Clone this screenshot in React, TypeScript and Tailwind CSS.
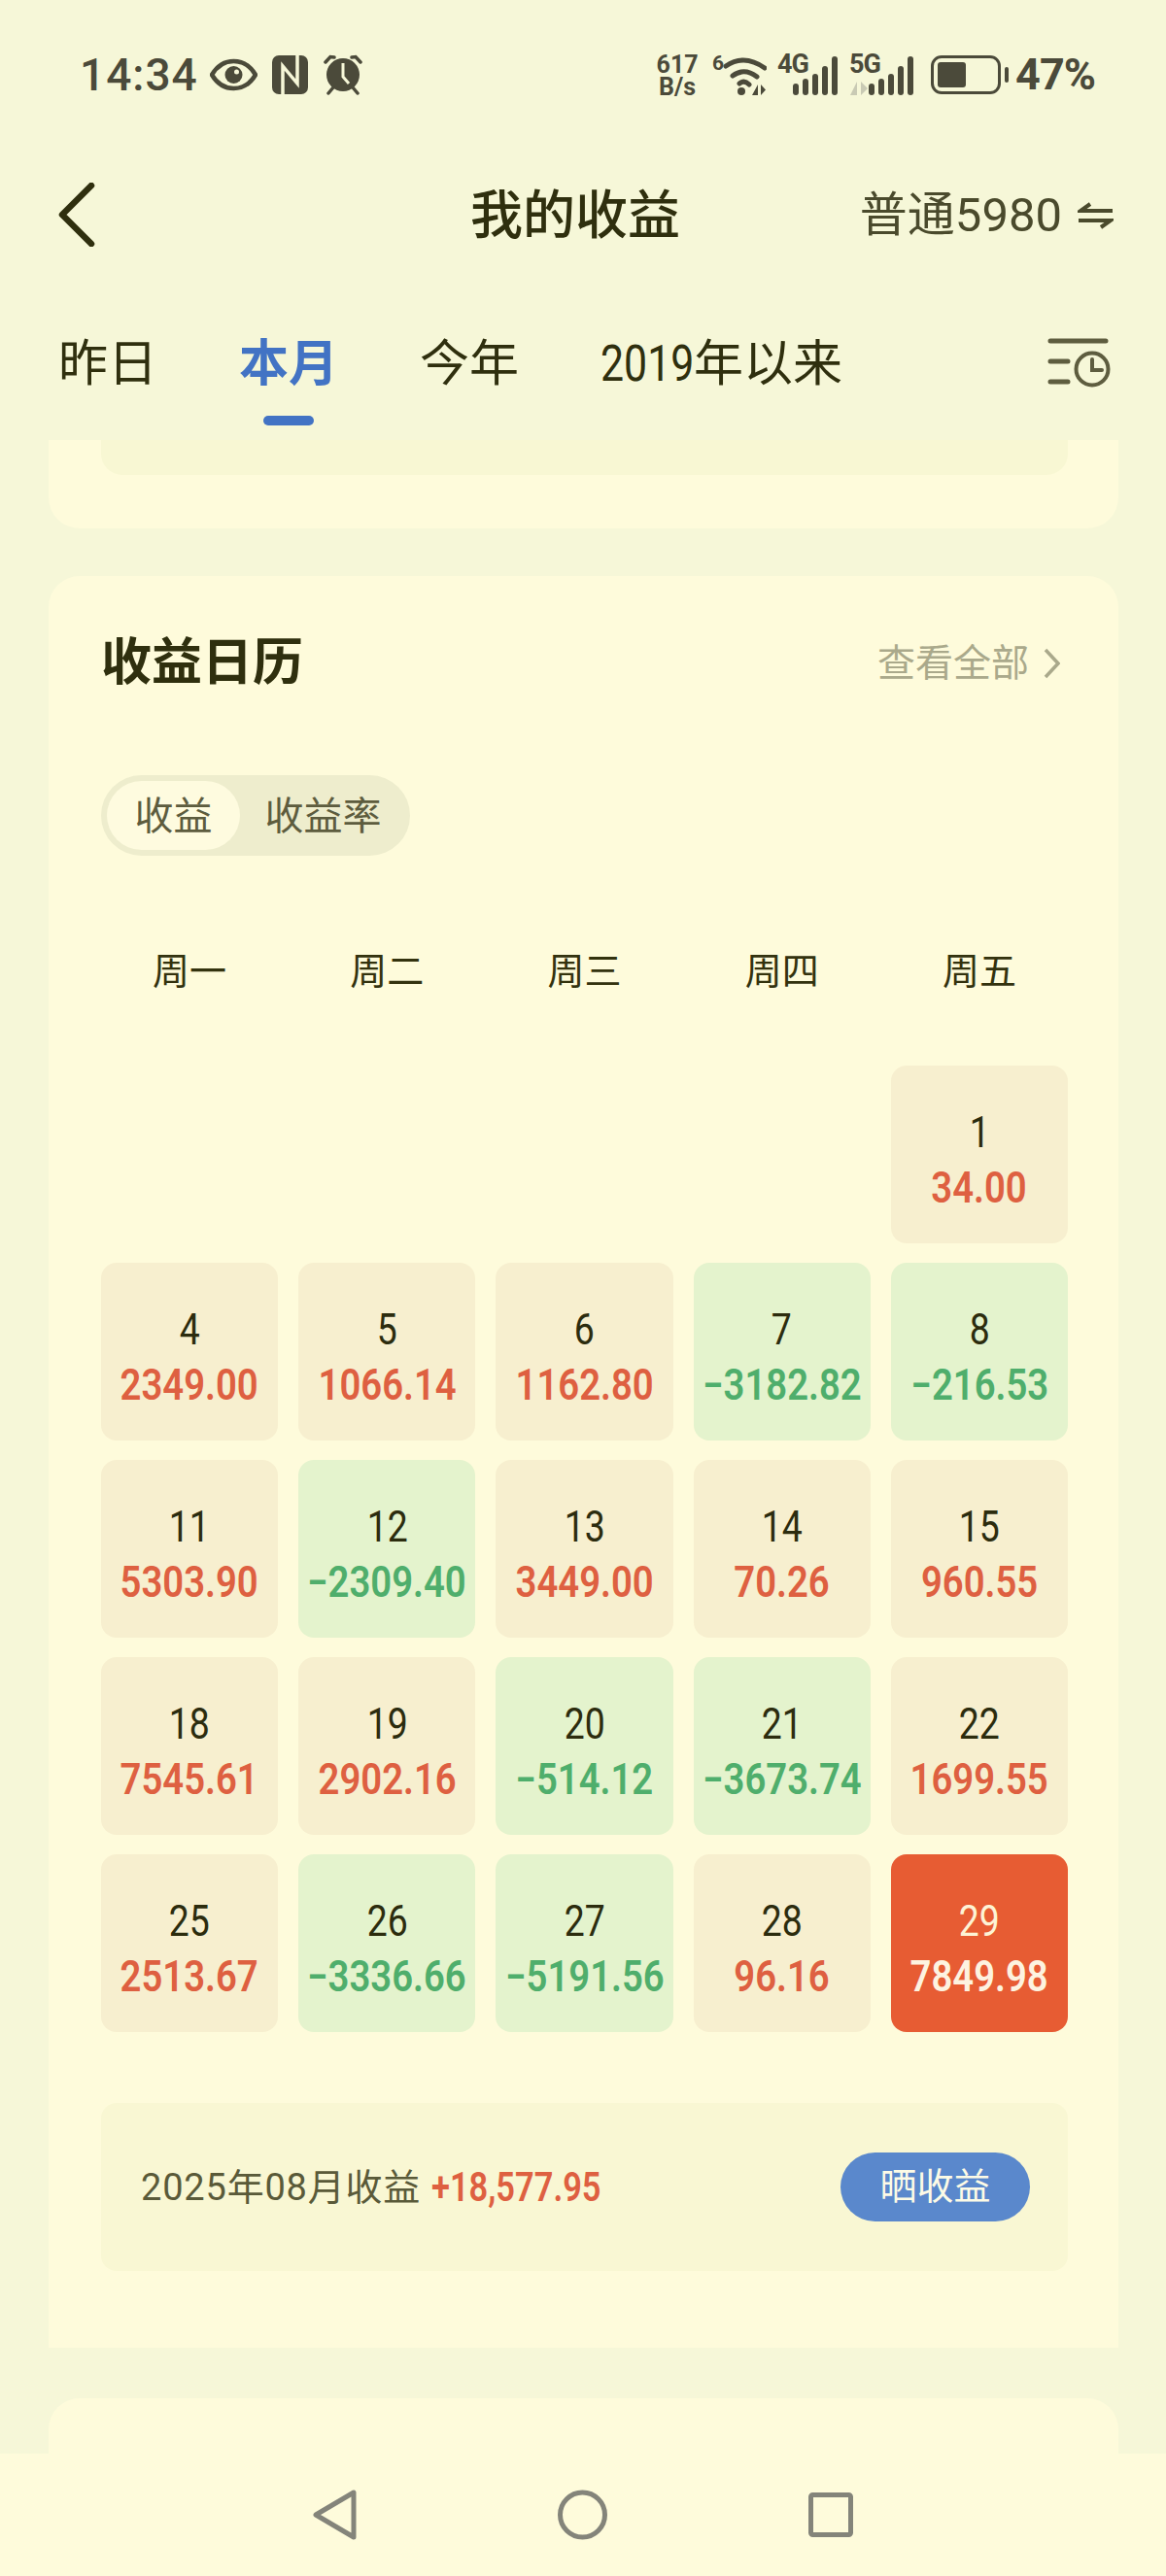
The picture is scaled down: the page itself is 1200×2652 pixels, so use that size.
type Day = { d: number; v: string; kind: 'up' | 'down' | 'max' }

const weeks: (Day | null)[][] = [
  [null, null, null, null, { d: 1, v: '34.00', kind: 'up' }],
  [
    { d: 4, v: '2349.00', kind: 'up' },
    { d: 5, v: '1066.14', kind: 'up' },
    { d: 6, v: '1162.80', kind: 'up' },
    { d: 7, v: '-3182.82', kind: 'down' },
    { d: 8, v: '-216.53', kind: 'down' },
  ],
  [
    { d: 11, v: '5303.90', kind: 'up' },
    { d: 12, v: '-2309.40', kind: 'down' },
    { d: 13, v: '3449.00', kind: 'up' },
    { d: 14, v: '70.26', kind: 'up' },
    { d: 15, v: '960.55', kind: 'up' },
  ],
  [
    { d: 18, v: '7545.61', kind: 'up' },
    { d: 19, v: '2902.16', kind: 'up' },
    { d: 20, v: '-514.12', kind: 'down' },
    { d: 21, v: '-3673.74', kind: 'down' },
    { d: 22, v: '1699.55', kind: 'up' },
  ],
  [
    { d: 25, v: '2513.67', kind: 'up' },
    { d: 26, v: '-3336.66', kind: 'down' },
    { d: 27, v: '-5191.56', kind: 'down' },
    { d: 28, v: '96.16', kind: 'up' },
    { d: 29, v: '7849.98', kind: 'max' },
  ],
]

function DayCell({ day }: { day: Day | null }) {
  if (!day) return <div className="h-[183px]" />
  const bg = day.kind === 'up' ? 'bg-[#f7efcf]' : day.kind === 'down' ? 'bg-[#e4f3cd]' : 'bg-[#e75c33]'
  const num = day.kind === 'max' ? 'text-[#fdf3d5]' : 'text-[#2c2c0e]'
  const val = day.kind === 'up' ? 'text-[#de6041]' : day.kind === 'down' ? 'text-[#4fae6c]' : 'text-[#fdf3e0]'
  return (
    <div className={`h-[183px] rounded-[16px] flex flex-col items-center pt-[46px] ${bg}`}>
      <div className={`text-[44px] leading-[46px] scale-x-[0.85] ${num}`}>{day.d}</div>
      <div className={`text-[44px] leading-[46px] mt-[11px] font-semibold scale-x-[0.87] whitespace-nowrap ${val}`}>{day.v.replace('-', '−')}</div>
    </div>
  )
}

function Signal({ label, wide, arrows }: { label: string; wide: string; arrows?: boolean }) {
  return (
    <div className={`flex h-[42px] relative ${wide}`}>
      <span className="absolute left-0 top-[-4px] text-[27px] leading-[28px] font-bold tracking-[-1px]">{label}</span>
      {arrows && (
        <svg width="20" height="14" viewBox="0 0 20 14" className="absolute left-0 bottom-0" fill="#c9cab4">
          <path d="M8 0v14H1ZM12 0l7 7-7 7Z" />
        </svg>
      )}
      <div className="absolute right-0 bottom-0 flex items-end gap-[4px]">
        <div className="w-[6px] h-[12px] rounded-full bg-current" />
        <div className="w-[6px] h-[17px] rounded-full bg-current" />
        <div className="w-[6px] h-[22px] rounded-full bg-current" />
        <div className="w-[6px] h-[30px] rounded-full bg-current" />
        <div className="w-[6px] h-[40px] rounded-full bg-current" />
      </div>
    </div>
  )
}

function StatusBar() {
  return (
    <div className="h-[150px] shrink-0 flex items-start justify-between pl-[82px] pr-[73px] pt-[52px] text-[#4b4a3a]">
      <div className="flex items-center h-[50px]">
        <span className="text-[46px] leading-[50px] font-medium tracking-[1px] mr-[12px]">14:34</span>
        {/* eye */}
        <svg width="49" height="34" viewBox="0 0 49 34" className="mr-[15px]">
          <path d="M2 17C8 7 15 3 24.500 3S41 7 47 17c-6 10-13 14-22.500 14S8 27 2 17Z" fill="none" stroke="currentColor" strokeWidth="4.500" />
          <circle cx="24.500" cy="17" r="9" fill="currentColor" />
          <circle cx="27.500" cy="14" r="2.500" fill="#f6f7d8" />
        </svg>
        {/* nfc */}
        <svg width="37" height="40" viewBox="0 0 37 40" className="mr-[16px]">
          <rect x="0" y="0" width="37" height="40" rx="7" fill="currentColor" />
          <path d="M11 40V11l15 18V0" fill="none" stroke="#f6f7d8" strokeWidth="3.500" />
        </svg>
        {/* alarm */}
        <svg width="40" height="42" viewBox="0 0 40 42">
          <circle cx="20" cy="21" r="17" fill="currentColor" />
          <path d="M2 8 7 2.500 11 3M38 8l-5-5.500L29 3M5 40l5-6M35 40l-5-6" stroke="currentColor" strokeWidth="3.500" strokeLinecap="round" fill="none" />
          <path d="M20 9v14l6 7" fill="none" stroke="#f6f7d8" strokeWidth="3" />
        </svg>
      </div>
      <div className="flex items-center h-[50px]">
        <div className="flex flex-col items-center text-[25px] leading-[23px] font-bold w-[46px] mr-[13px] mt-[1px]">
          <span>617</span>
          <span>B/s</span>
        </div>
        {/* wifi 6 */}
        <div className="relative w-[56px] h-[50px] mr-[11px]">
          <span className="absolute left-0 top-[2px] text-[21px] leading-[22px] font-bold">6</span>
          <svg width="56" height="50" viewBox="0 0 56 50">
            <path d="M14 16Q33 3 54 18M21 26Q33 17 46 27M28 34Q33 30 38 35" fill="none" stroke="currentColor" strokeWidth="5" strokeLinecap="round" />
            <circle cx="30" cy="42" r="4" fill="currentColor" />
            <path d="M47 35v11h-6ZM50 35v11l5-5.500Z" fill="currentColor" />
          </svg>
        </div>
        <Signal label="4G" wide="w-[62px] mr-[12px]" />
        <Signal label="5G" wide="w-[66px] mr-[18px]" arrows />
        {/* battery */}
        <div className="flex items-center mr-[7px]">
          <div className="w-[72px] h-[40px] rounded-[11px] border-[3.5px] border-current p-[4px]">
            <div className="w-[29px] h-full rounded-[3px] bg-current" />
          </div>
          <div className="w-[4px] h-[16px] rounded-full bg-current ml-[4px]" />
        </div>
        <span className="text-[45px] leading-[50px] font-bold tracking-[-1px]">47%</span>
      </div>
    </div>
  )
}

function Header() {
  return (
    <>
      <div className="h-[141px] shrink-0 flex items-center pl-[60px] pr-[54px]">
        <svg width="38" height="66" viewBox="0 0 38 66" fill="none" stroke="#2f2f0e" strokeWidth="6.500" strokeLinecap="round" strokeLinejoin="round">
          <path d="M34 3 4 33l30 30" />
        </svg>
        <div className="text-[54px] leading-[70px] font-medium text-[#2f2f0e] ml-[386px] mt-[4px]">我的收益</div>
        <div className="ml-auto flex items-center gap-[16px] text-[49px] leading-[60px] text-[#4a4a2c] mt-[3px]">
          <span>普通5980</span>
          <svg width="37" height="28" viewBox="0 0 37 28" fill="none" stroke="#4a4a2c" strokeWidth="4">
            <path d="M36 9H3l10-7M1 19h33l-10 7" />
          </svg>
        </div>
      </div>
      <div className="h-[162px] shrink-0 flex items-start pl-[60px] pr-[56px] text-[51px] leading-[72px]">
        <span className="mt-[48px] text-[#2f2f0e] mr-[84px]">昨日</span>
        <span className="relative mt-[48px] font-bold text-[#4273c4] mr-[84px]">
          本月
          <span className="absolute left-[25px] top-[89px] w-[52px] h-[10px] rounded-full bg-[#4273c4]" />
        </span>
        <span className="mt-[48px] text-[#2f2f0e] mr-[84px]">今年</span>
        <span className="mt-[48px] text-[#2f2f0e] flex">
          <span className="inline-block w-[96px] origin-left scale-x-[0.84]">2019</span>年以来
        </span>
        <svg width="66" height="52" viewBox="0 0 66 52" fill="none" stroke="#5e5d3f" strokeWidth="5" className="ml-auto mt-[57px]" strokeLinecap="round">
          <path d="M3 3h57M3 24h18M3 45h18" />
          <circle cx="46" cy="32" r="16.500" strokeWidth="4" />
          <path d="M46 22v11h10" strokeWidth="4" />
        </svg>
      </div>
    </>
  )
}

function Calendar() {
  return (
    <div className="h-[1824px] mt-[49px] ml-[50px] mr-[49px] shrink-0 rounded-t-[32px] bg-[#fefbdb] pl-[54px] pr-[52px] pt-[60px]">
      <div className="h-[58px] flex items-center justify-between">
        <span className="text-[52px] leading-[58px] font-bold text-[#2f2f0e] mt-[1px]">收益日历</span>
        <span className="flex items-center gap-[15px] text-[39px] leading-[50px] text-[#aaa98b] mt-[2px]">
          查看全部
          <svg width="17" height="32" viewBox="0 0 17 32" fill="none" stroke="#aaa98b" strokeWidth="3.500" className="mr-[8px]">
            <path d="m2 2 13 14L2 30" />
          </svg>
        </span>
      </div>

      <div className="mt-[87px] w-[318px] h-[83px] rounded-full bg-[#eeedcd] p-[6px] flex items-center text-[40px] text-[#5d5c3e]">
        <span className="w-[137px] h-[71px] rounded-full bg-[#fefbdf] flex items-center justify-center pt-[3px]">收益</span>
        <span className="flex-1 text-center pl-[2px] pt-[3px]">收益率</span>
      </div>

      <div className="mt-[94px] h-[50px] grid grid-cols-5 gap-[21px] text-[38px] leading-[50px] text-[#33320e] text-center">
        <span>周一</span>
        <span>周二</span>
        <span>周三</span>
        <span>周四</span>
        <span>周五</span>
      </div>

      <div className="mt-[72px] grid grid-cols-5 gap-x-[21px] gap-y-[20px]">
        {weeks.flat().map((day, i) => (
          <DayCell key={i} day={day} />
        ))}
      </div>

      <div className="mt-[73px] h-[173px] rounded-[16px] bg-[#f9f7d3] pl-[41px] pr-[39px] flex items-center justify-between">
        <span className="flex items-center text-[38px] leading-[50px] text-[#5a5a39] whitespace-nowrap">
          <span className="tracking-[0.8px] mr-[11px]">2025年08月收益</span>
          <span className="inline-block w-[170px] origin-left scale-x-[0.82] text-[42px] font-semibold text-[#de6041]">+18,577.95</span>
        </span>
        <span className="w-[195px] h-[71px] rounded-full bg-[#5a88cc] flex items-center justify-center text-[38px] text-[#fdfbe6]">晒收益</span>
      </div>
    </div>
  )
}

export default function App() {
  return (
    <div className='w-[1200px] h-[2652px] overflow-hidden flex flex-col bg-[#f6f7d8] font-["Roboto","Noto_Sans_CJK_SC",sans-serif]'>
      <StatusBar />
      <Header />

      <div className="flex-1 min-h-0 overflow-hidden flex flex-col">
        <div className="h-[91px] ml-[50px] mr-[49px] rounded-b-[32px] bg-[#fefbdb] pl-[54px] pr-[52px] shrink-0">
          <div className="h-[36px] rounded-b-[22px] bg-[#f8f7d3]" />
        </div>
        <Calendar />
        <div className="h-[80px] mt-[52px] ml-[50px] mr-[49px] shrink-0 rounded-t-[32px] bg-[#fefbdb]" />
      </div>

      {/* nav bar */}
      <div className="h-[126px] shrink-0 bg-[#fefbdb] flex items-center justify-center gap-[207px]">
        <svg width="45" height="52" viewBox="0 0 45 52" fill="none" stroke="#84847a" strokeWidth="5" strokeLinejoin="round">
          <path d="M42 3v46L3 26Z" />
        </svg>
        <svg width="51" height="52" viewBox="0 0 51 52" fill="none" stroke="#84847a" strokeWidth="5">
          <circle cx="25.500" cy="26" r="23" />
        </svg>
        <svg width="46" height="46" viewBox="0 0 46 46" fill="none" stroke="#84847a" strokeWidth="5" strokeLinejoin="round">
          <rect x="2.500" y="2.500" width="41" height="41" rx="2" />
        </svg>
      </div>
    </div>
  )
}
